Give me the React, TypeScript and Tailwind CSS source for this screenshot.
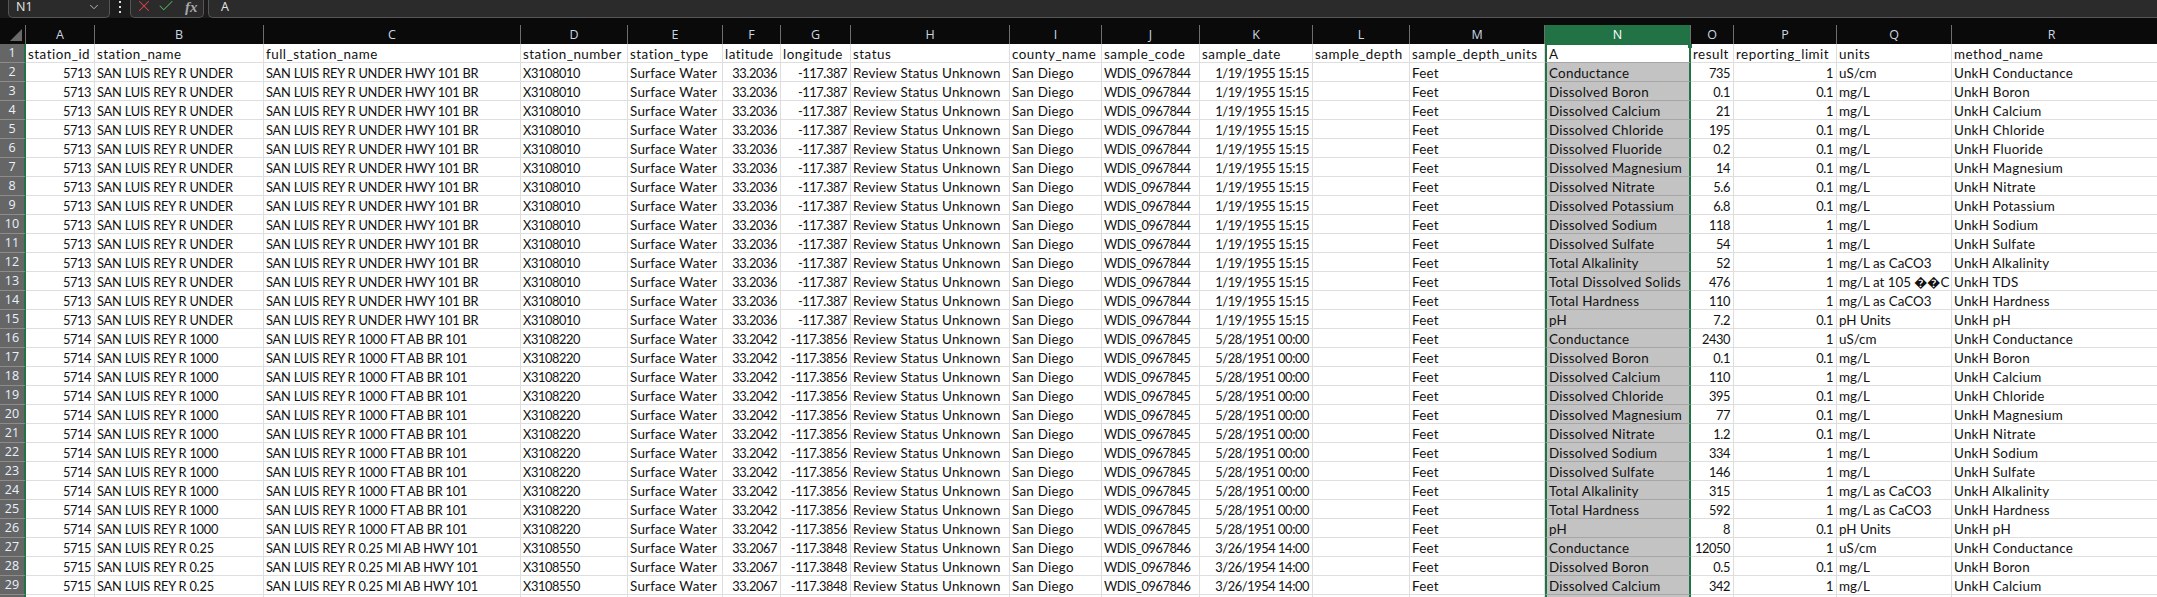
import { ChevronDown, X, Check } from "lucide-react";

const gridCols =
  "grid grid-cols-[26px_69px_169px_257px_107px_95px_58px_70px_159px_92px_98px_113px_97px_135px_146px_43px_103px_115px_205px]";

const letters = ["A", "B", "C", "D", "E", "F", "G", "H", "I", "J", "K", "L", "M", "N", "O", "P", "Q", "R"];

const heads = [
  "station_id",
  "station_name",
  "full_station_name",
  "station_number",
  "station_type",
  "latitude",
  "longitude",
  "status",
  "county_name",
  "sample_code",
  "sample_date",
  "sample_depth",
  "sample_depth_units",
  "A",
  "result",
  "reporting_limit",
  "units",
  "method_name",
];

const stations = {
  a: ["5713", "SAN LUIS REY R UNDER", "SAN LUIS REY R UNDER HWY 101 BR", "X3108010", "33.2036", "-117.387", "WDIS_0967844", "1/19/1955 15:15"],
  b: ["5714", "SAN LUIS REY R 1000", "SAN LUIS REY R 1000 FT AB BR 101", "X3108220", "33.2042", "-117.3856", "WDIS_0967845", "5/28/1951 00:00"],
  c: ["5715", "SAN LUIS REY R 0.25", "SAN LUIS REY R 0.25 MI AB HWY 101", "X3108550", "33.2067", "-117.3848", "WDIS_0967846", "3/26/1954 14:00"],
};

const samples: [keyof typeof stations, string, string, string, string, string][] = [
  ["a", "Conductance", "735", "1", "uS/cm", "UnkH Conductance"],
  ["a", "Dissolved Boron", "0.1", "0.1", "mg/L", "UnkH Boron"],
  ["a", "Dissolved Calcium", "21", "1", "mg/L", "UnkH Calcium"],
  ["a", "Dissolved Chloride", "195", "0.1", "mg/L", "UnkH Chloride"],
  ["a", "Dissolved Fluoride", "0.2", "0.1", "mg/L", "UnkH Fluoride"],
  ["a", "Dissolved Magnesium", "14", "0.1", "mg/L", "UnkH Magnesium"],
  ["a", "Dissolved Nitrate", "5.6", "0.1", "mg/L", "UnkH Nitrate"],
  ["a", "Dissolved Potassium", "6.8", "0.1", "mg/L", "UnkH Potassium"],
  ["a", "Dissolved Sodium", "118", "1", "mg/L", "UnkH Sodium"],
  ["a", "Dissolved Sulfate", "54", "1", "mg/L", "UnkH Sulfate"],
  ["a", "Total Alkalinity", "52", "1", "mg/L as CaCO3", "UnkH Alkalinity"],
  ["a", "Total Dissolved Solids", "476", "1", "mg/L at 105 ��C", "UnkH TDS"],
  ["a", "Total Hardness", "110", "1", "mg/L as CaCO3", "UnkH Hardness"],
  ["a", "pH", "7.2", "0.1", "pH Units", "UnkH pH"],
  ["b", "Conductance", "2430", "1", "uS/cm", "UnkH Conductance"],
  ["b", "Dissolved Boron", "0.1", "0.1", "mg/L", "UnkH Boron"],
  ["b", "Dissolved Calcium", "110", "1", "mg/L", "UnkH Calcium"],
  ["b", "Dissolved Chloride", "395", "0.1", "mg/L", "UnkH Chloride"],
  ["b", "Dissolved Magnesium", "77", "0.1", "mg/L", "UnkH Magnesium"],
  ["b", "Dissolved Nitrate", "1.2", "0.1", "mg/L", "UnkH Nitrate"],
  ["b", "Dissolved Sodium", "334", "1", "mg/L", "UnkH Sodium"],
  ["b", "Dissolved Sulfate", "146", "1", "mg/L", "UnkH Sulfate"],
  ["b", "Total Alkalinity", "315", "1", "mg/L as CaCO3", "UnkH Alkalinity"],
  ["b", "Total Hardness", "592", "1", "mg/L as CaCO3", "UnkH Hardness"],
  ["b", "pH", "8", "0.1", "pH Units", "UnkH pH"],
  ["c", "Conductance", "12050", "1", "uS/cm", "UnkH Conductance"],
  ["c", "Dissolved Boron", "0.5", "0.1", "mg/L", "UnkH Boron"],
  ["c", "Dissolved Calcium", "342", "1", "mg/L", "UnkH Calcium"],
];

// Lato is wider than the sheet's font on digits and capitals, narrower on lower case
const numeric = "text-[12.8px] tracking-[-0.4px]";
const upper = "text-[12.8px] tracking-[-0.2px]";
const mixed = "tracking-[0.25px]";
const headText = "tracking-[0.5px]";

function Cell({ value = "", right = false, track = "" }: { value?: string; right?: boolean; track?: string }) {
  return (
    <div
      className={`overflow-hidden whitespace-nowrap border-r border-b border-[#dedede] pl-[2px] pr-[3px] pt-[2px] leading-[16px] last:border-r-0 ${
        right ? "text-right" : "text-left"
      } ${track}`}
    >
      {value}
    </div>
  );
}

function RowHead({ n }: { n?: number }) {
  return (
    <div className="border-r-2 border-b border-r-[#217346] border-b-[#8c8c8c] bg-[#666666] text-center font-['Open_Sans',sans-serif] text-[12.5px] leading-[18px] text-[#e8f2ff]">
      {n}
    </div>
  );
}

function FormulaBar() {
  return (
    <div className="flex h-[18px] bg-[#1c1c1c] text-[#e6e6e6]">
      <div className="ml-[8px] flex h-[18px] w-[102px] items-center justify-between rounded-b-[5px] border border-t-0 border-[#565656] bg-[#2b2b2b] pl-[7px] pr-[8px] font-['Open_Sans',sans-serif] text-[12.5px] leading-none">
        <span className="-mt-[2px]">N1</span>
        <ChevronDown size={14} strokeWidth={1.5} className="-mt-[4px] text-[#c8c8c8]" />
      </div>
      <div className="ml-[8px] flex w-[4px] flex-col items-center gap-[3px] pt-[1px]">
        <span className="h-[2px] w-[2px] bg-[#e0e0e0]" />
        <span className="h-[2px] w-[2px] bg-[#e0e0e0]" />
        <span className="h-[2px] w-[2px] bg-[#e0e0e0]" />
      </div>
      <div className="ml-[8px] flex h-[18px] w-[74px] items-center rounded-b-[5px] border border-t-0 border-[#565656] bg-[#2b2b2b] pl-[4px]">
        <X size={18} strokeWidth={1.4} className="-mt-[5px] text-[#d9464a]" />
        <Check size={18} strokeWidth={1.4} className="-mt-[5px] ml-[4px] text-[#4fae5f]" />
        <span className="-mt-[2px] ml-[10px] font-['Liberation_Serif',serif] text-[15px] font-bold italic leading-none text-[#a8a8a8]">
          fx
        </span>
      </div>
      <div className="ml-[4px] flex h-[18px] flex-1 items-center rounded-bl-[5px] border-b border-l border-[#565656] bg-[#2b2b2b] pl-[12px] font-['Open_Sans',sans-serif] text-[12.5px] leading-none">
        <span className="-mt-[2px]">A</span>
      </div>
    </div>
  );
}

function ColumnHeader() {
  return (
    <div className={`${gridCols} h-[26px] bg-[#0a0a0a] pt-[7px]`}>
      <div className="relative border-r border-[#6e6e6e]">
        <svg width="13" height="13" viewBox="0 0 13 13" className="absolute left-[10px] top-[4px]">
          <path d="M12 0 V12 H0 Z" fill="#6a6a6a" />
        </svg>
      </div>
      {letters.map((l) => (
        <div
          key={l}
          className={`border-r border-[#6e6e6e] text-center font-['Open_Sans',sans-serif] text-[12.5px] leading-[19px] last:border-r-0 last:pr-[6px] ${
            l === "N" ? "bg-[#217346] text-white" : "text-[#c9d6e2]"
          }`}
        >
          {l}
        </div>
      ))}
    </div>
  );
}

function SelectedCell({ value, first = false }: { value?: string; first?: boolean }) {
  return (
    <div
      className={`relative whitespace-nowrap border-x-2 border-b border-x-[#217346] border-b-[#a6a6a6] pl-[2px] leading-[16px] tracking-[0.25px] ${
        first ? "border-t border-t-[#217346] bg-white pt-[1px]" : "bg-[#c3c3c3] pt-[2px]"
      }`}
    >
      {value}
      {first && <span className="absolute -right-[3px] -top-[1px] h-[4px] w-[4px] bg-[#217346]" />}
    </div>
  );
}

function HeaderRow() {
  return (
    <div className={`${gridCols} h-[19px]`}>
      <RowHead n={1} />
      {heads.map((h, i) =>
        i === 13 ? <SelectedCell key={h} value={h} first /> : <Cell key={h} value={h} track={headText} />,
      )}
    </div>
  );
}

export default function App() {
  return (
    <div className="h-[597px] w-[2157px] overflow-hidden bg-white font-['Lato',sans-serif] text-[13.4px] text-[#111111]">
      <FormulaBar />
      <ColumnHeader />
      <HeaderRow />
      {samples.map(([st, param, result, limit, units, method], i) => {
        const s = stations[st];
        return (
          <div key={i} className={`${gridCols} h-[19px]`}>
            <RowHead n={i + 2} />
            <Cell value={s[0]} right track={numeric} />
            <Cell value={s[1]} track={upper} />
            <Cell value={s[2]} track={upper} />
            <Cell value={s[3]} track={numeric} />
            <Cell value="Surface Water" track={mixed} />
            <Cell value={s[4]} right track={numeric} />
            <Cell value={s[5]} right track={numeric} />
            <Cell value="Review Status Unknown" track={mixed} />
            <Cell value="San Diego" track={mixed} />
            <Cell value={s[6]} track={numeric} />
            <Cell value={s[7]} right track={numeric} />
            <Cell />
            <Cell value="Feet" track={mixed} />
            <SelectedCell value={param} />
            <Cell value={result} right track={numeric} />
            <Cell value={limit} right track={numeric} />
            <Cell value={units} />
            <Cell value={method} track={mixed} />
          </div>
        );
      })}
      {/* row 30 only peeks in at the bottom edge */}
      <div className={`${gridCols} h-[19px]`}>
        <RowHead />
        {letters.map((l) => (l === "N" ? <SelectedCell key={l} /> : <Cell key={l} />))}
      </div>
    </div>
  );
}
